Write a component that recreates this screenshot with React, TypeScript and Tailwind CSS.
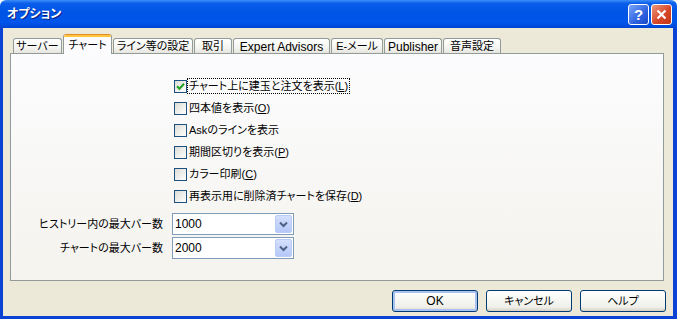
const font =
  "font-[family-name:'Liberation_Sans','Noto_Sans_CJK_JP',sans-serif] [font-feature-settings:'palt']";

function Check({ checked }: { checked?: boolean }) {
  return (
    <span className="w-[13px] h-[13px] border border-[#1C5180] bg-[linear-gradient(135deg,#DCDCD7,#FFFFFF)] flex items-center justify-center shrink-0">
      {checked && (
        <svg width="9" height="9" viewBox="0 0 9 9">
          <path d="M1 4.2 L3.5 6.7 L8 1.8" stroke="#21A121" strokeWidth="2" fill="none" />
        </svg>
      )}
    </span>
  );
}

function Row({
  text,
  mn,
  checked,
  focus,
}: {
  text: string;
  mn?: string;
  checked?: boolean;
  focus?: boolean;
}) {
  return (
    <div className="h-[22px] flex items-center">
      <Check checked={checked} />
      <span
        className={
          "px-px leading-[14px] border whitespace-nowrap " +
          (focus ? "border-dotted border-black" : "border-transparent")
        }
      >
        {text}
        {mn && (
          <>
            (<u>{mn}</u>)
          </>
        )}
      </span>
    </div>
  );
}

function Select({ value }: { value: string }) {
  return (
    <div className="w-[122px] h-[22px] border border-[#7F9DB9] bg-white flex items-center justify-between pl-[2px] pr-[1px]">
      <span className="text-[12px]">{value}</span>
      <span className="w-[17px] h-[18px] rounded-[2px] border border-[#BACBF5] bg-[linear-gradient(to_bottom,#D3DFFD,#B5C8F7)] flex items-center justify-center">
        <svg width="9" height="7" viewBox="0 0 9 7">
          <path d="M1 1.5 L4.5 5 L8 1.5" stroke="#4D6185" strokeWidth="2" fill="none" />
        </svg>
      </span>
    </div>
  );
}

function Tab({ label, w, active, latin }: { label: string; w: string; active?: boolean; latin?: boolean }) {
  const size = latin ? "text-[12px]" : "text-[11px]";
  if (active) {
    return (
      <div className={`${w} h-[20px] relative z-10 flex flex-col bg-[#FCFCFE] border-x border-[#919B9C] rounded-t-[3px] overflow-hidden`}>
        <div className="h-[1px] bg-[#E68B2C]" />
        <div className="h-[2px] bg-[#FFC73C]" />
        <div className={`flex-1 flex items-center justify-center leading-none whitespace-nowrap ${size}`}>{label}</div>
      </div>
    );
  }
  return (
    <div className={`${w} h-[16px] flex items-center justify-center leading-none whitespace-nowrap ${size} border border-b-0 border-[#919B9C] rounded-t-[3px] bg-[linear-gradient(to_bottom,#FFFFFF,#F3F3EF_60%,#E4E2DA)]`}>
      {label}
    </div>
  );
}

function Button({ label, def }: { label: string; def?: boolean }) {
  return (
    <div
      className={
        "w-[86px] h-[22px] rounded-[3px] border border-[#003C74] bg-[linear-gradient(to_bottom,#FFFFFF,#F0F0EA_80%,#D6D0C5)] flex items-center justify-center " +
        (def ? "shadow-[inset_0_0_0_2px_#A9C2F1] text-[12px]" : "")
      }
    >
      {label}
    </div>
  );
}

export default function App() {
  return (
    <div className={`w-[677px] h-[319px] flex flex-col text-[11px] text-black ${font}`}>
      {/* title bar */}
      <div className="h-[28px] shrink-0 rounded-t-[6px] bg-[linear-gradient(to_bottom,#3D8EF7_0%,#0A5EEB_12%,#0054E6_45%,#0055EB_80%,#0045D2_100%)] flex items-center justify-between pl-[7px] pr-[5px]">
        <span className="text-white font-bold text-[12px] [text-shadow:1px_1px_0_#0A1E80]">オプション</span>
        <div className="flex gap-[2px] mt-[1px]">
          <div className="w-[21px] h-[21px] rounded-[3px] border border-white bg-[linear-gradient(135deg,#7BA6FA,#2E62E0_60%,#1A49C8)] flex items-center justify-center text-white font-bold text-[15px] leading-none">
            ?
          </div>
          <div className="w-[21px] h-[21px] rounded-[3px] border border-white bg-[linear-gradient(135deg,#EE9A80,#D7482A_55%,#C33512)] flex items-center justify-center">
            <svg width="11" height="11" viewBox="0 0 11 11">
              <path d="M1.5 1.5 L9.5 9.5 M9.5 1.5 L1.5 9.5" stroke="white" strokeWidth="2.2" />
            </svg>
          </div>
        </div>
      </div>

      {/* body */}
      <div className="flex-1 bg-[#ECE9D8] border-l-[3px] border-r-[4px] border-b-[3px] border-[#0A42D4] flex flex-col pl-[7px] pt-[6px]">
        <div className="flex items-end gap-[1px] pl-[3px] -mb-px h-[20px]">
          <Tab label="サーバー" w="w-[49px]" />
          <Tab label="チャート" w="w-[49px]" active />
          <Tab label="ライン等の設定" w="w-[80px]" />
          <Tab label="取引" w="w-[38px]" />
          <Tab label="Expert Advisors" w="w-[97px]" latin />
          <Tab label="E-メール" w="w-[52px]" />
          <Tab label="Publisher" w="w-[58px]" latin />
          <Tab label="音声設定" w="w-[58px]" />
        </div>
        <div className="w-[654px] h-[228px] border border-[#919B9C] bg-[linear-gradient(to_bottom,#FCFCFE,#F4F3EE)] flex flex-col pt-[21px]">
          <div className="pl-[163px] flex flex-col">
            <Row text="チャート上に建玉と注文を表示" mn="L" checked focus />
            <Row text="四本値を表示" mn="O" />
            <Row text="Askのラインを表示" />
            <Row text="期間区切りを表示" mn="P" />
            <Row text="カラー印刷" mn="C" />
            <Row text="再表示用に削除済チャートを保存" mn="D" />
          </div>
          <div className="mt-[5px] flex flex-col">
            <div className="h-[24px] flex items-center">
              <span className="w-[152px] text-right mr-[9px] whitespace-nowrap">ヒストリー内の最大バー数</span>
              <Select value="1000" />
            </div>
            <div className="h-[24px] flex items-center">
              <span className="w-[152px] text-right mr-[9px] whitespace-nowrap">チャートの最大バー数</span>
              <Select value="2000" />
            </div>
          </div>
        </div>
        <div className="flex justify-end gap-[8px] pr-[7px] mt-[9px]">
          <Button label="OK" def />
          <Button label="キャンセル" />
          <Button label="ヘルプ" />
        </div>
      </div>
    </div>
  );
}
